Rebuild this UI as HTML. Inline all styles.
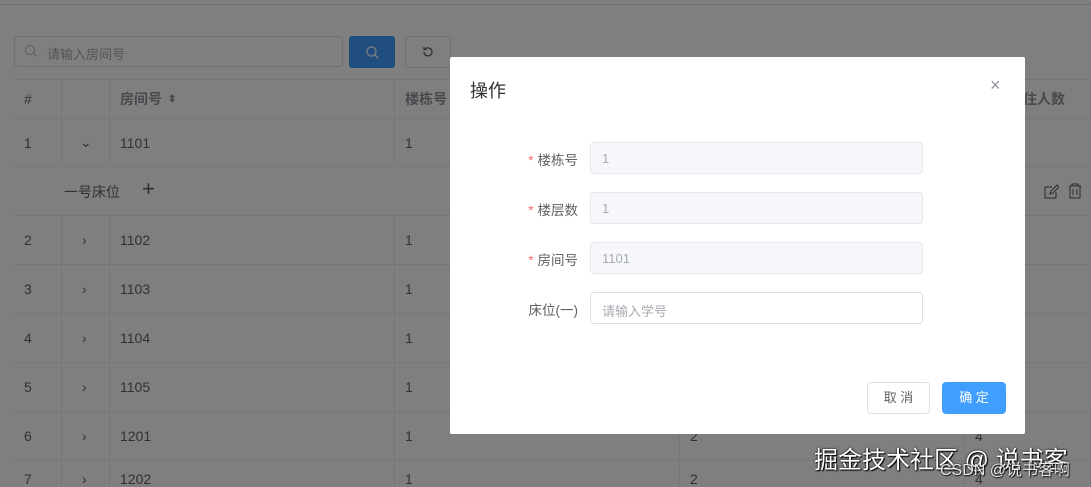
<!DOCTYPE html>
<html style="width:1091px;height:487px;overflow:hidden"><head><meta charset="utf-8"><style>
*{box-sizing:border-box;margin:0;padding:0}
body{width:1091px;height:487px;overflow:hidden;position:relative;background:#fff;font-family:"Liberation Sans","Noto Sans CJK SC",sans-serif;font-size:14px;color:#606266}
.abs{position:absolute}
.topline{left:0;top:0;width:1091px;height:5px;border-bottom:1px solid #ddd}
.search{left:14px;top:36px;width:329px;height:31px;border:1px solid #dcdfe6;border-radius:4px;color:#a8abb2;font-size:13px;padding:7px 0 0 32px}
.btn1{left:349px;top:36px;width:46px;height:32px;background:#409eff;border-radius:3px}
.btn2{left:405px;top:36px;width:46px;height:32px;border:1px solid #dcdfe6;border-radius:3px}
.row{left:14px;width:1077px;border-bottom:1px solid #ebeef5}
.cell{position:absolute;top:0;height:100%;border-right:1px solid #ebeef5;padding-left:10px;display:flex;align-items:center}
.ov{left:0;top:0;width:1091px;height:487px;background:rgba(0,0,0,.5)}
.modal{left:450px;top:57px;width:575px;height:377px;background:#fff;border-radius:2px}
.lab{position:absolute;width:128px;text-align:right;font-size:13.5px;color:#606266}
.lab b{color:#f56c6c;font-weight:normal;margin-right:4px}
.inp{position:absolute;left:140px;width:333px;height:32px;border:1px solid #e4e7ed;border-radius:4px;background:#f5f7fa;color:#a8abb2;font-size:13px;padding:8px 0 0 11px}
.wm{color:#fff;font-size:24px;text-shadow:0 0 2px #000,1px 1px 1px #000}
</style></head><body>
<div class="abs topline"></div>
<div class="abs search">请输入房间号</div>
<svg class="abs" style="left:24px;top:44px" width="14" height="14"><circle cx="6" cy="6" r="4.5" fill="none" stroke="#bbb"/><path d="M9.5 9.5l3 3" stroke="#bbb"/></svg>
<div class="abs btn1"></div>
<svg class="abs" style="left:365px;top:45px" width="14" height="14"><circle cx="6.5" cy="6.5" r="4.5" fill="none" stroke="#fff" stroke-width="1.3"/><path d="M10 10l3 3" stroke="#fff" stroke-width="1.3"/></svg>
<div class="abs btn2"></div>
<svg class="abs" style="left:421px;top:45px" width="14" height="14"><path d="M3 7a4 4 0 1 0 1.5-3.2M3 2v2.5h2.5" fill="none" stroke="#555" stroke-width="1.2"/></svg>

<div class="abs row" style="top:79px;height:40px;border-top:1px solid #ebeef5;font-weight:bold;color:#909399">
<div class="cell" style="left:0;width:48px">#</div><div class="cell" style="left:48px;width:48px"></div>
<div class="cell" style="left:96px;width:285px">房间号 <span style="font-size:10px;margin-left:6px">⬍</span></div>
<div class="cell" style="left:381px;width:285px">楼栋号</div><div class="cell" style="left:666px;width:285px"></div><div class="cell" style="left:951px;width:126px;padding-left:44px">入住人数</div></div>
<div class="abs row" style="top:119px;height:48px"><div class="cell" style="left:0;width:48px">1</div><div class="cell" style="left:48px;width:48px;padding-left:18px">⌄</div><div class="cell" style="left:96px;width:285px">1101</div><div class="cell" style="left:381px;width:285px">1</div></div>
<div class="abs row" style="top:167px;height:49px"><span style="position:absolute;left:50px;top:15px">一号床位</span><span style="position:absolute;left:128px;top:9px;font-size:22px">+</span>
<svg style="position:absolute;left:1029px;top:17px" width="16" height="16"><path d="M2 3h7M2 3v11h11V8M7 10l1-3 6-6 2 2-6 6z" fill="none" stroke="#555"/></svg>
<svg style="position:absolute;left:1054px;top:16px" width="14" height="16"><path d="M1 3h12M4 3V1h6v2M2 3v12h10V3M5 6v6M9 6v6" fill="none" stroke="#555"/></svg></div>
<div class="abs row" style="top:216px;height:49px"><div class="cell" style="left:0;width:48px">2</div><div class="cell" style="left:48px;width:48px;padding-left:20px">›</div><div class="cell" style="left:96px;width:285px">1102</div><div class="cell" style="left:381px;width:285px">1</div></div>
<div class="abs row" style="top:265px;height:49px"><div class="cell" style="left:0;width:48px">3</div><div class="cell" style="left:48px;width:48px;padding-left:20px">›</div><div class="cell" style="left:96px;width:285px">1103</div><div class="cell" style="left:381px;width:285px">1</div></div>
<div class="abs row" style="top:314px;height:49px"><div class="cell" style="left:0;width:48px">4</div><div class="cell" style="left:48px;width:48px;padding-left:20px">›</div><div class="cell" style="left:96px;width:285px">1104</div><div class="cell" style="left:381px;width:285px">1</div></div>
<div class="abs row" style="top:363px;height:49px"><div class="cell" style="left:0;width:48px">5</div><div class="cell" style="left:48px;width:48px;padding-left:20px">›</div><div class="cell" style="left:96px;width:285px">1105</div><div class="cell" style="left:381px;width:285px">1</div></div>
<div class="abs row" style="top:412px;height:49px"><div class="cell" style="left:0;width:48px">6</div><div class="cell" style="left:48px;width:48px;padding-left:20px">›</div><div class="cell" style="left:96px;width:285px">1201</div><div class="cell" style="left:381px;width:285px">1</div><div class="cell" style="left:666px;width:285px">2</div><div class="cell" style="left:951px;width:126px">4</div></div>
<div class="abs row" style="top:461px;height:26px;border-bottom:none"><div class="cell" style="left:0;width:48px;align-items:flex-end">7</div><div class="cell" style="left:48px;width:48px;padding-left:20px;align-items:flex-end">›</div><div class="cell" style="left:96px;width:285px;align-items:flex-end">1202</div><div class="cell" style="left:381px;width:285px;align-items:flex-end">1</div><div class="cell" style="left:666px;width:285px;align-items:flex-end">2</div><div class="cell" style="left:951px;width:126px;align-items:flex-end">4</div></div>

<div class="abs ov"></div>
<div class="abs modal">
<div style="position:absolute;left:20px;top:20px;font-size:18px;color:#303133">操作</div>
<div style="position:absolute;left:540px;top:18px;font-size:18px;color:#909399">×</div>
<div class="lab" style="top:92px"><b>*</b>楼栋号</div><div class="inp" style="top:85px">1</div>
<div class="lab" style="top:142px"><b>*</b>楼层数</div><div class="inp" style="top:135px">1</div>
<div class="lab" style="top:192px"><b>*</b>房间号</div><div class="inp" style="top:185px">1101</div>
<div class="lab" style="top:242px">床位(一)</div><div class="inp" style="top:235px;background:#fff;border-color:#dcdfe6">请输入学号</div>
<div style="position:absolute;left:417px;top:325px;width:63px;height:32px;border:1px solid #dcdfe6;border-radius:4px;text-align:center;line-height:30px;font-size:13px;color:#606266">取 消</div>
<div style="position:absolute;left:492px;top:325px;width:64px;height:32px;background:#409eff;border-radius:4px;text-align:center;line-height:32px;font-size:13px;color:#fff">确 定</div>
</div>
<div class="abs wm" style="left:814px;top:440px">掘金技术社区 @ 说书客</div>
<div class="abs wm" style="left:940px;top:456px;font-size:16px;opacity:.8">CSDN @说书客啊</div>
</body></html>
